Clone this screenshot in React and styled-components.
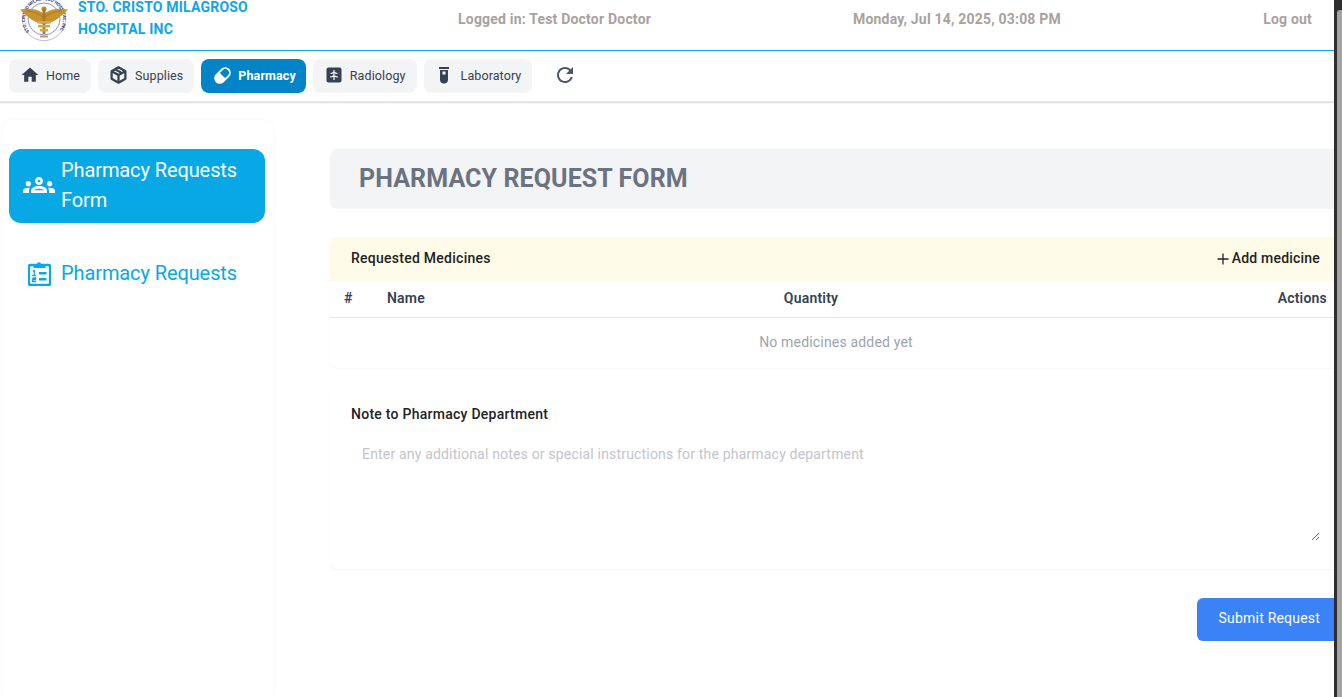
import styled, { createGlobalStyle } from "styled-components";
import { MdHome, MdOutlineGroups, MdRefresh } from "react-icons/md";

const GlobalStyle = createGlobalStyle`
  html, body {
    margin: 0;
    height: 100%;
    overflow: hidden;
    background: #fff;
    font-family: Roboto, "Liberation Sans", sans-serif;
  }
  * { box-sizing: border-box; }
`;

const Shell = styled.div`
  display: flex;
  width: 1342px;
  height: 697px;
  overflow: hidden;
`;

const Page = styled.div`
  width: 1334px;
  flex: none;
  display: flex;
  flex-direction: column;
  overflow: hidden;
`;

const ScrollTrack = styled.div`
  width: 8px;
  flex: none;
  padding: 10px 0 0 3px;
  background: #2e2e2e;
`;

const ScrollThumb = styled.div`
  height: 100%;
  background: #a3a3a3;
  border-top-left-radius: 3px;
`;

const Header = styled.header`
  height: 51px;
  flex: none;
  display: grid;
  grid-template-columns: 400px 315px 1fr auto;
  align-items: start;
  border-bottom: 1px solid #0ea5e9;
  padding-right: 22px;
`;

const Brand = styled.div`
  display: flex;
  align-items: center;
  gap: 10px;
  margin-top: -5px;
  padding-left: 20px;
`;

const BrandName = styled.div`
  font-size: 14px;
  line-height: 22px;
  font-weight: 700;
  color: #0ea5e9;
  letter-spacing: 0.2px;
`;

const HeaderText = styled.div`
  font-size: 14px;
  line-height: 20px;
  font-weight: 700;
  color: #a8a29e;
  letter-spacing: 0.2px;
  margin-top: 9px;
  padding-left: ${(props) => props.$left || "58px"};
`;

const Nav = styled.nav`
  height: 52px;
  flex: none;
  display: flex;
  align-items: flex-start;
  gap: 7px;
  padding: 8px 9px 0;
  border-bottom: 2px solid #e5e5e5;
  box-shadow: 0 1px 1px rgba(0, 0, 0, 0.03);
`;

const Tab = styled.a`
  height: 34px;
  display: flex;
  align-items: center;
  gap: ${(props) => props.$gap || "8px"};
  padding: 0 ${(props) => props.$right || "11px"} 2px ${(props) => props.$pad || "12px"};
  border-radius: 8px;
  font-size: 12.5px;
  letter-spacing: 0.1px;
  font-weight: ${(props) => (props.$active ? 700 : 400)};
  color: ${(props) => (props.$active ? "#fff" : "#374151")};
  background: ${(props) => (props.$active ? "#0284c7" : "#f3f4f6")};
  svg { flex: none; color: ${(props) => (props.$active ? "#fff" : "#374151")}; }
`;

const RefreshButton = styled.button`
  width: 34px;
  height: 34px;
  margin-left: 9px;
  padding: 0 0 2px;
  border: 0;
  background: none;
  color: #4b5563;
  display: flex;
  align-items: center;
  justify-content: center;
`;

const Body = styled.div`
  flex: 1;
  min-height: 0;
  display: flex;
`;

const Sidebar = styled.aside`
  width: 270px;
  flex: none;
  margin: 17px 0 0 3px;
  padding: 29px 8px 0 6px;
  border-radius: 10px 10px 0 0;
  box-shadow: 0 0 6px rgba(0, 0, 0, 0.03);
  display: flex;
  flex-direction: column;
  gap: 26px;
`;

const SideItem = styled.a`
  display: flex;
  align-items: center;
  gap: 6px;
  padding: ${(props) => (props.$active ? "5px 14px 7px" : "6px 14px")};
  min-height: ${(props) => (props.$active ? "74px" : "48px")};
  border-radius: 12px;
  font-size: 20px;
  line-height: 30px;
  letter-spacing: -0.1px;
  color: ${(props) => (props.$active ? "#fff" : "#08a8e4")};
  background: ${(props) => (props.$active ? "#08a8e4" : "transparent")};
`;

const SideIcon = styled.span`
  width: 32px;
  flex: none;
  display: flex;
  justify-content: center;
`;

const Main = styled.main`
  width: 1012px;
  flex: none;
  margin-left: 57px;
  padding-top: 46px;
`;

const TitleBar = styled.h1`
  margin: 0 0 28px;
  height: 60px;
  display: flex;
  align-items: center;
  padding: 0 0 1px 29px;
  border-radius: 8px;
  background: #f3f4f6;
  font-size: 25px;
  letter-spacing: 0.1px;
  font-weight: 700;
  color: #6b7280;
`;

const Card = styled.section`
  border-radius: 8px;
  box-shadow: 0 1px 2px rgba(0, 0, 0, 0.04);
  background: #fff;
`;

const CardHead = styled.div`
  height: 44px;
  display: flex;
  align-items: center;
  justify-content: space-between;
  padding: 0 22px 2px 21px;
  background: #fefce8;
  border-radius: 8px 8px 0 0;
  font-size: 14px;
  letter-spacing: 0.26px;
  font-weight: 500;
  color: #222;
`;

const AddButton = styled.span`
  display: flex;
  align-items: center;
  gap: 3px;
  letter-spacing: 0.2px;
  svg { margin-top: 2px; }
`;

const Row = styled.div`
  display: grid;
  grid-template-columns: 43px 324px 200px 1fr;
  align-items: center;
  height: 37px;
  padding: 0 15px 2px 14px;
  border-bottom: 1px solid #e5e7eb;
  font-size: 14px;
  letter-spacing: 0.2px;
  font-weight: 600;
  color: #374151;
`;

const Cell = styled.span`
  text-align: ${(props) => props.$align || "left"};
`;

const EmptyRow = styled.div`
  height: 50px;
  padding-bottom: 2px;
  display: flex;
  align-items: center;
  justify-content: center;
  font-size: 14px;
  letter-spacing: 0.18px;
  color: #9ca3af;
`;

const NoteCard = styled(Card)`
  margin-top: 19px;
  height: 182px;
  padding: 17px 21px 0;
`;

const NoteLabel = styled.label`
  display: block;
  font-size: 14px;
  line-height: 20px;
  letter-spacing: 0.26px;
  font-weight: 500;
  color: #222;
  margin-bottom: 10px;
`;

const NoteInput = styled.textarea`
  display: block;
  width: 969px;
  height: 107px;
  padding: 10px 11px;
  border: 0;
  outline: none;
  font-family: inherit;
  font-size: 14px;
  line-height: 20px;
  letter-spacing: 0.18px;
  &::placeholder { color: #c4c4cc; }
`;

const Actions = styled.div`
  display: flex;
  justify-content: flex-end;
  margin-top: 29px;
`;

const SubmitButton = styled.button`
  height: 43px;
  padding: 0 22px 3px 22px;
  border: 0;
  border-radius: 6px;
  background: #3b82f6;
  color: #fff;
  font-family: inherit;
  font-size: 14px;
  letter-spacing: 0.2px;
`;

const Logo = () => (
  <svg width="48" height="46" viewBox="0 0 48 46">
    <defs>
      <path id="logo-ring" d="M9.500 36.500a19 19 0 1 1 29 0" />
    </defs>
    <circle cx="24" cy="24" r="21.600" fill="#fff" stroke="#a9adc4" strokeWidth="0.800" />
    <circle cx="24" cy="24" r="16" fill="#fff" stroke="#5b6aa8" strokeWidth="0.700" />
    <text fontFamily="Roboto, sans-serif" fontSize="4.400" fontWeight="700" fill="#2c3a80">
      <textPath href="#logo-ring">STO. CRISTO MILAGROSO HOSPITAL, INC.</textPath>
    </text>
    <path d="M0 14.500C8 13 16 13 23 18v11C15 28 7 22 0 14.500zM48 14.500C40 13 32 13 25 18v11C33 28 41 22 48 14.500z" fill="#c8922c" />
    <path d="M6 16c6 0 12 2 17 6M42 16c-6 0-12 2-17 6" fill="none" stroke="#9c6f1e" strokeWidth="0.700" />
    <circle cx="24" cy="14" r="2.500" fill="#b98526" />
    <path d="M22.600 14h2.800v25h-2.800z" fill="#a97a24" />
    <path d="M17 26h14v2.500H17zM18 30h12v2.500H18zM20 34h8v2.500h-8z" fill="#d8a63f" />
    <path d="M20 40.500h8v2h-8z" fill="#c98f8f" />
  </svg>
);

const CubeIcon = () => (
  <svg width="17" height="18" viewBox="1.500 1 21 22" fill="none" stroke="currentColor" strokeWidth="2.800" strokeLinejoin="round">
    <path d="M12 2.500l8.500 4.800v9.400L12 21.500l-8.500-4.800V7.300z" />
    <path d="M3.500 7.300L12 12l8.500-4.700M12 12v9.500M7.800 4.900l8.500 4.800" />
  </svg>
);

const PillIcon = () => (
  <svg width="17" height="17" viewBox="1 1 22 22">
    <g transform="rotate(-45 12 12)">
      <rect x="1" y="6" width="22" height="12" rx="6" fill="none" stroke="currentColor" strokeWidth="2.400" />
      <path d="M12 6H7a6 6 0 0 0 0 12h5z" fill="currentColor" />
    </g>
  </svg>
);

const ScanIcon = () => (
  <svg width="16" height="16" viewBox="0 0 16 16">
    <rect x="0.500" y="0.500" width="15" height="15" rx="2" fill="currentColor" />
    <path d="M8 3v10M4.500 6.500C6 6.500 7 6 8 5c1 1 2 1.500 3.500 1.500M4 10c1.500 0 3-.5 4-1.500 1 1 2.500 1.500 4 1.500" fill="none" stroke="#f3f4f6" strokeWidth="1.200" />
  </svg>
);

const TubeIcon = () => (
  <svg width="10" height="17" viewBox="0 0 10 17">
    <path d="M0 0h10v2H0z" fill="currentColor" />
    <path d="M1 3h8v9.500a4 4 0 0 1-8 0z" fill="currentColor" />
    <path d="M3.500 4.500h3v3h-3z" fill="#f3f4f6" />
  </svg>
);

const ClipboardIcon = () => (
  <svg width="23" height="25" viewBox="0.500 0 23 25">
    <rect x="1.300" y="4" width="21.400" height="20" rx="2" fill="none" stroke="currentColor" strokeWidth="2.600" />
    <path d="M6 3h3.300a2.300 2.300 0 0 1 4.400 0H18v4H6z" fill="currentColor" />
    <path d="M11.500 11h7.500v2.400h-7.500zM11.500 17h7.500v2.400h-7.500z" fill="currentColor" />
    <path d="M5.300 10.300l1.500-.8v5M4.800 14.600h3.600M5 17h3v1.500H5V20.500h3.400" fill="none" stroke="currentColor" strokeWidth="1.300" />
  </svg>
);

const PlusIcon = () => (
  <svg width="12" height="12" viewBox="0 0 12 12" stroke="currentColor" strokeWidth="1.300">
    <path d="M6 0.500v11M0.500 6h11" />
  </svg>
);

const tabs = [
  { label: "Home", icon: <MdHome size={20} />, pad: "11px", gap: "6px" },
  { label: "Supplies", icon: <CubeIcon /> },
  { label: "Pharmacy", icon: <PillIcon />, active: true, pad: "13px", gap: "7px", right: "10px" },
  { label: "Radiology", icon: <ScanIcon />, pad: "13px" },
  { label: "Laboratory", icon: <TubeIcon />, pad: "15px", gap: "12px" },
];

export default function App() {
  return (
    <>
      <GlobalStyle />
      <Shell>
        <Page>
          <Header>
            <Brand>
              <Logo />
              <BrandName>
                STO. CRISTO MILAGROSO
                <br />
                HOSPITAL INC
              </BrandName>
            </Brand>
            <HeaderText>Logged in: Test Doctor Doctor</HeaderText>
            <HeaderText $left="138px">Monday, Jul 14, 2025, 03:08 PM</HeaderText>
            <HeaderText $left="0">Log out</HeaderText>
          </Header>
          <Nav>
            {tabs.map((tab) => (
              <Tab key={tab.label} $active={tab.active} $pad={tab.pad} $gap={tab.gap} $right={tab.right}>
                {tab.icon}
                {tab.label}
              </Tab>
            ))}
            <RefreshButton aria-label="Refresh">
              <MdRefresh size={24} />
            </RefreshButton>
          </Nav>
          <Body>
            <Sidebar>
              <SideItem $active>
                <SideIcon>
                  <MdOutlineGroups size={32} />
                </SideIcon>
                <span>Pharmacy Requests Form</span>
              </SideItem>
              <SideItem>
                <SideIcon>
                  <ClipboardIcon />
                </SideIcon>
                <span>Pharmacy Requests</span>
              </SideItem>
            </Sidebar>
            <Main>
              <TitleBar>PHARMACY REQUEST FORM</TitleBar>
              <Card>
                <CardHead>
                  Requested Medicines
                  <AddButton>
                    <PlusIcon />
                    Add medicine
                  </AddButton>
                </CardHead>
                <Row>
                  <Cell>#</Cell>
                  <Cell>Name</Cell>
                  <Cell $align="center">Quantity</Cell>
                  <Cell $align="right">Actions</Cell>
                </Row>
                <EmptyRow>No medicines added yet</EmptyRow>
              </Card>
              <NoteCard>
                <NoteLabel>Note to Pharmacy Department</NoteLabel>
                <NoteInput placeholder="Enter any additional notes or special instructions for the pharmacy department" />
              </NoteCard>
              <Actions>
                <SubmitButton>Submit Request</SubmitButton>
              </Actions>
            </Main>
          </Body>
        </Page>
        <ScrollTrack>
          <ScrollThumb />
        </ScrollTrack>
      </Shell>
    </>
  );
}
